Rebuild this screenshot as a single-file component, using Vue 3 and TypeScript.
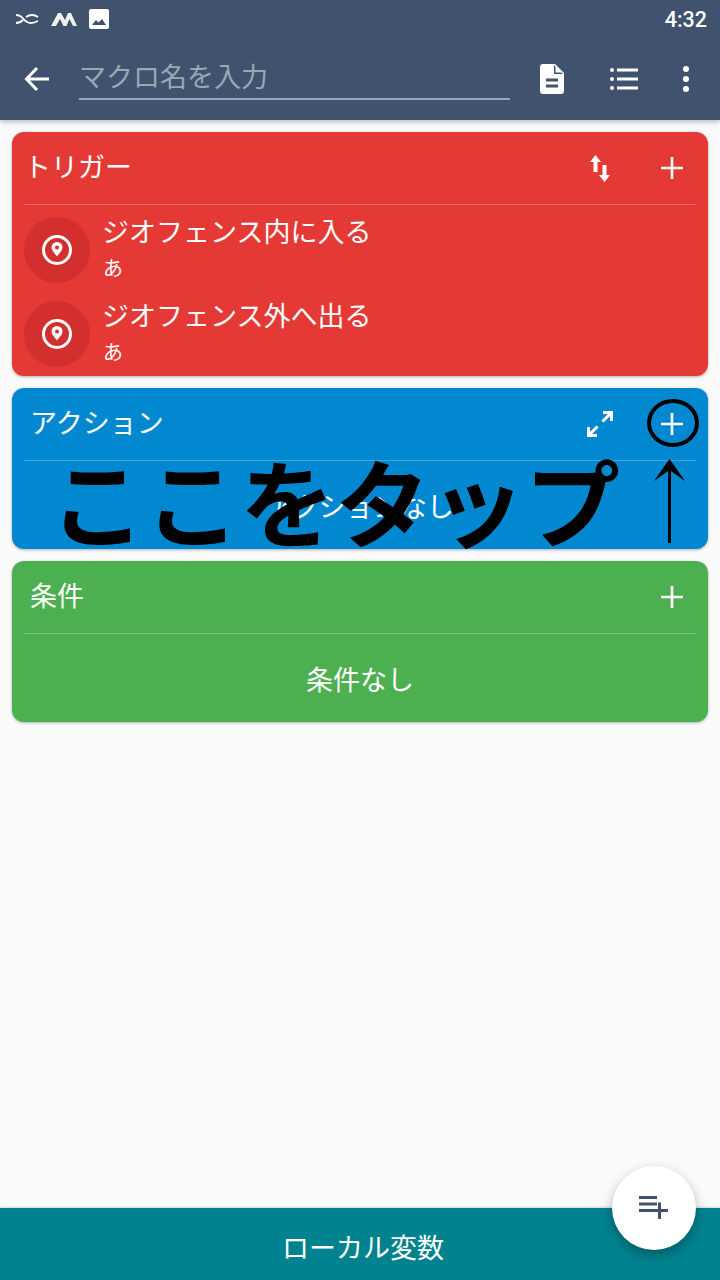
<script setup lang="ts">
const triggers = ['ジオフェンス内に入る', 'ジオフェンス外へ出る']
</script>

<template>
  <div class="page">
    <header class="top">
      <div class="status">
        <div class="status__icons">
          <svg width="24" height="14" viewBox="0 0 24 14" fill="none" stroke="#fff" stroke-width="1.800">
            <path d="M1 3c3 0 5 1 7 3.500s5 4.500 8 4.500c2 0 4-.5 7-2" />
            <path d="M1 11c3 0 5-1 7-3M11 5c2-1.500 4-2 6-2 2 0 4 .5 6 2" />
          </svg>
          <svg width="26" height="16" viewBox="0 0 26 16" fill="#eef0ec">
            <path d="M0 15 7 2h3l4 7 3-7h3l6 13h-4l-3.500-7-3 7h-3L9 8l-4 7z" />
          </svg>
          <svg width="20" height="20" viewBox="0 0 20 20">
            <rect width="20" height="20" rx="2" fill="#fff" />
            <path d="M3 16 7 11l2.500 2.500L13 10l4 6z" fill="#40526d" />
          </svg>
        </div>
        <span class="status__time">4:32</span>
      </div>
      <div class="appbar">
        <svg class="appbar__back" width="28" height="28" viewBox="0 0 28 28" fill="none" stroke="#fff" stroke-width="3">
          <path d="M26 14H4M14 3 3.500 14 14 25" />
        </svg>
        <div class="appbar__input">マクロ名を入力</div>
        <div class="appbar__actions">
          <svg width="24" height="30" viewBox="0 0 24 30">
            <path d="M3 0h12l9 9v18a3 3 0 0 1-3 3H3a3 3 0 0 1-3-3V3a3 3 0 0 1 3-3z" fill="#fff" />
            <path d="M6 14.500h12v3H6zM6 20.500h12v3H6z" fill="#40526d" />
            <path d="M14 1v9h9z" fill="#40526d" />
            <path d="M15.500 1.500v7h7z" fill="#fff" />
          </svg>
          <svg width="28" height="24" viewBox="0 0 28 24" fill="#fff">
            <circle cx="2" cy="3" r="2" /><circle cx="2" cy="12" r="2" /><circle cx="2" cy="21" r="2" />
            <path d="M7 1.500h21v3H7zM7 10.500h21v3H7zM7 19.500h21v3H7z" />
          </svg>
          <svg class="appbar__more" width="6" height="26" viewBox="0 0 6 26" fill="#fff">
            <circle cx="3" cy="3" r="3" /><circle cx="3" cy="13" r="3" /><circle cx="3" cy="23" r="3" />
          </svg>
        </div>
      </div>
    </header>

    <main class="list">
      <section class="card card--red">
        <div class="card__head">
          <span class="card__title card__title--tight">トリガー</span>
          <svg class="card__tool card__tool--sort" width="20" height="27" viewBox="0 0 20 27" fill="#fff">
            <path d="M5.500 0l5.500 7H7.500v10h-4V7H0zM12.500 10h4v10H20l-5.500 7L9 20h3.500z" />
          </svg>
          <svg class="card__plus" width="22" height="22" viewBox="0 0 22 22" fill="#fff"><path d="M9.700 0h2.600v9.700H22v2.600h-9.700V22H9.700v-9.700H0V9.700h9.700z" /></svg>
        </div>
        <div class="card__items">
          <div v-for="t in triggers" :key="t" class="item">
            <div class="item__badge">
              <svg width="32" height="32" viewBox="0 0 32 32">
                <circle cx="16" cy="16" r="13.500" fill="none" stroke="#fff" stroke-width="3" />
                <path d="M16 8a5.500 5.500 0 0 1 5.500 5.500c0 3-3 5.500-5.500 9-2.500-3.500-5.500-6-5.500-9A5.500 5.500 0 0 1 16 8z" fill="#fff" />
                <circle cx="16" cy="13.500" r="2" fill="#d32f2f" />
              </svg>
            </div>
            <div class="item__text">
              <div class="item__name">{{ t }}</div>
              <div class="item__sub">あ</div>
            </div>
          </div>
        </div>
      </section>

      <section class="card card--blue">
        <div class="card__head">
          <span class="card__title card__title--action">アクション</span>
          <svg class="card__tool" width="28" height="28" viewBox="0 0 28 28" fill="none" stroke="#fff" stroke-width="3">
            <path d="M17 2.500h8.500V11M25.500 2.500 16.500 11.500M11 25.500H2.500V17M2.500 25.500l9-9" />
          </svg>
          <svg class="card__plus" width="22" height="22" viewBox="0 0 22 22" fill="#fff"><path d="M9.700 0h2.600v9.700H22v2.600h-9.700V22H9.700v-9.700H0V9.700h9.700z" /></svg>
        </div>
        <div class="card__empty">アクションなし</div>
        <div class="note" lang="ja">ここをタップ</div>
        <div class="ring" />
        <svg class="arrow" width="32" height="84" viewBox="0 0 32 84" fill="#000">
          <path d="M14 8h3v76h-3z" />
          <path d="M0 22 15.500 0 31 22 15.500 11z" />
        </svg>
      </section>

      <section class="card card--green">
        <div class="card__head">
          <span class="card__title">条件</span>
          <svg class="card__plus" width="22" height="22" viewBox="0 0 22 22" fill="#fff"><path d="M9.700 0h2.600v9.700H22v2.600h-9.700V22H9.700v-9.700H0V9.700h9.700z" /></svg>
        </div>
        <div class="card__empty">条件なし</div>
      </section>
    </main>

    <footer class="bottom">
      <span class="bottom__label">ローカル変数</span>
      <button class="fab">
        <svg width="30" height="24" viewBox="0 0 30 24" fill="#40526d">
          <path d="M0 0h18v3H0zM0 6.500h18v3H0zM0 13h12v3H0zM19 6.500h3v6.500h7v3h-7v7h-3v-7h-7v-3h7z" />
        </svg>
      </button>
    </footer>
  </div>
</template>

<style scoped>
.page {
  width: 720px;
  height: 1280px;
  display: flex;
  flex-direction: column;
  overflow: hidden;
  background: #fafafa;
  color: #fff;
  font-family: "Noto Sans CJK JP", "Noto Sans", sans-serif;
}
.top {
  height: 120px;
  flex: none;
  background: #40526d;
  box-shadow: 0 2px 5px rgba(0, 0, 0, 0.25);
  position: relative;
  z-index: 2;
}
.status {
  height: 38px;
  display: flex;
  align-items: center;
  justify-content: space-between;
  padding: 0 13px 0 15px;
}
.status__icons {
  display: flex;
  align-items: center;
  gap: 12px;
}
.status__time {
  font: 500 21.500px Roboto, sans-serif;
}
.appbar {
  height: 82px;
  display: flex;
  align-items: center;
  padding-left: 23px;
}
.appbar__back { flex: none; }
.appbar__input {
  width: 431px;
  height: 40px;
  margin: 0 0 0 28px;
  border-bottom: 2px solid #9aa6b6;
  color: #9aa7b5;
  font-size: 27px;
  line-height: 36px;
}
.appbar__actions {
  display: flex;
  align-items: center;
  margin-left: 30px;
  gap: 46px;
}
.appbar__more { margin-left: -1px; }
.list {
  flex: 1;
  display: flex;
  flex-direction: column;
  gap: 12px;
  padding: 12px;
}
.card {
  position: relative;
  border-radius: 12px;
  box-shadow: 0 1px 3px rgba(0, 0, 0, 0.3);
}
.card--red { background: #e53935; }
.card--blue { background: #0288d1; }
.card--green { background: #4caf50; }
.card__head {
  height: 72px;
  margin: 0 12px;
  display: flex;
  align-items: center;
  border-bottom: 1px solid rgba(255, 255, 255, 0.25);
  position: relative;
}
.card__title {
  flex: 1;
  padding: 0 0 4px 6px;
  font-size: 27px;
  line-height: 66px;
}
.card__title--tight { padding-left: 0; }
.card__title--action { padding-left: 6px; }
.card__tool {
  margin-right: 47px;
}
.card__tool--sort {
  margin-right: 51px;
  margin-top: 1px;
}
.card__plus {
  margin-right: 13px;
}
.card__items {
  padding: 12px 12px 9px;
  display: flex;
  flex-direction: column;
  gap: 18px;
}
.item {
  display: flex;
  align-items: center;
  height: 66px;
  gap: 13px;
}
.item__badge {
  width: 66px;
  height: 66px;
  flex: none;
  border-radius: 50%;
  background: #d32f2f;
  display: flex;
  align-items: center;
  justify-content: center;
}
.item__text {
  margin: -2px 0 0 -1px;
}
.item__name {
  margin-bottom: 2px;
  font-size: 27px;
  line-height: 36px;
}
.item__sub {
  margin-left: 1px;
  font-size: 20px;
  line-height: 34px;
}
.card__empty {
  height: 88px;
  display: flex;
  align-items: center;
  justify-content: center;
  font-size: 27px;
}
.note {
  position: absolute;
  left: 38px;
  top: 42px;
  color: #000;
  font-size: 95px;
  font-weight: 700;
  line-height: 140px;
  white-space: nowrap;
}
.ring {
  position: absolute;
  left: 635px;
  top: 11px;
  width: 52px;
  height: 48px;
  box-sizing: border-box;
  border: 4px solid #000;
  border-radius: 50%;
}
.arrow {
  position: absolute;
  left: 642px;
  top: 71px;
}
.bottom {
  height: 72px;
  flex: none;
  position: relative;
  background: #00838f;
  box-shadow: 0 -1px 2px rgba(0, 0, 0, 0.15);
  display: flex;
  align-items: center;
  justify-content: center;
  padding-left: 6px;
  font-size: 27px;
}
.bottom__label {
  margin-top: 4px;
}
.fab {
  position: absolute;
  left: 612px;
  top: -42px;
  width: 84px;
  height: 84px;
  padding: 0;
  border: 0;
  border-radius: 50%;
  background: #fff;
  box-shadow: 0 5px 12px rgba(0, 0, 0, 0.3);
  display: flex;
  align-items: center;
  justify-content: center;
}
</style>

<style>
html, body { margin: 0; }
</style>
